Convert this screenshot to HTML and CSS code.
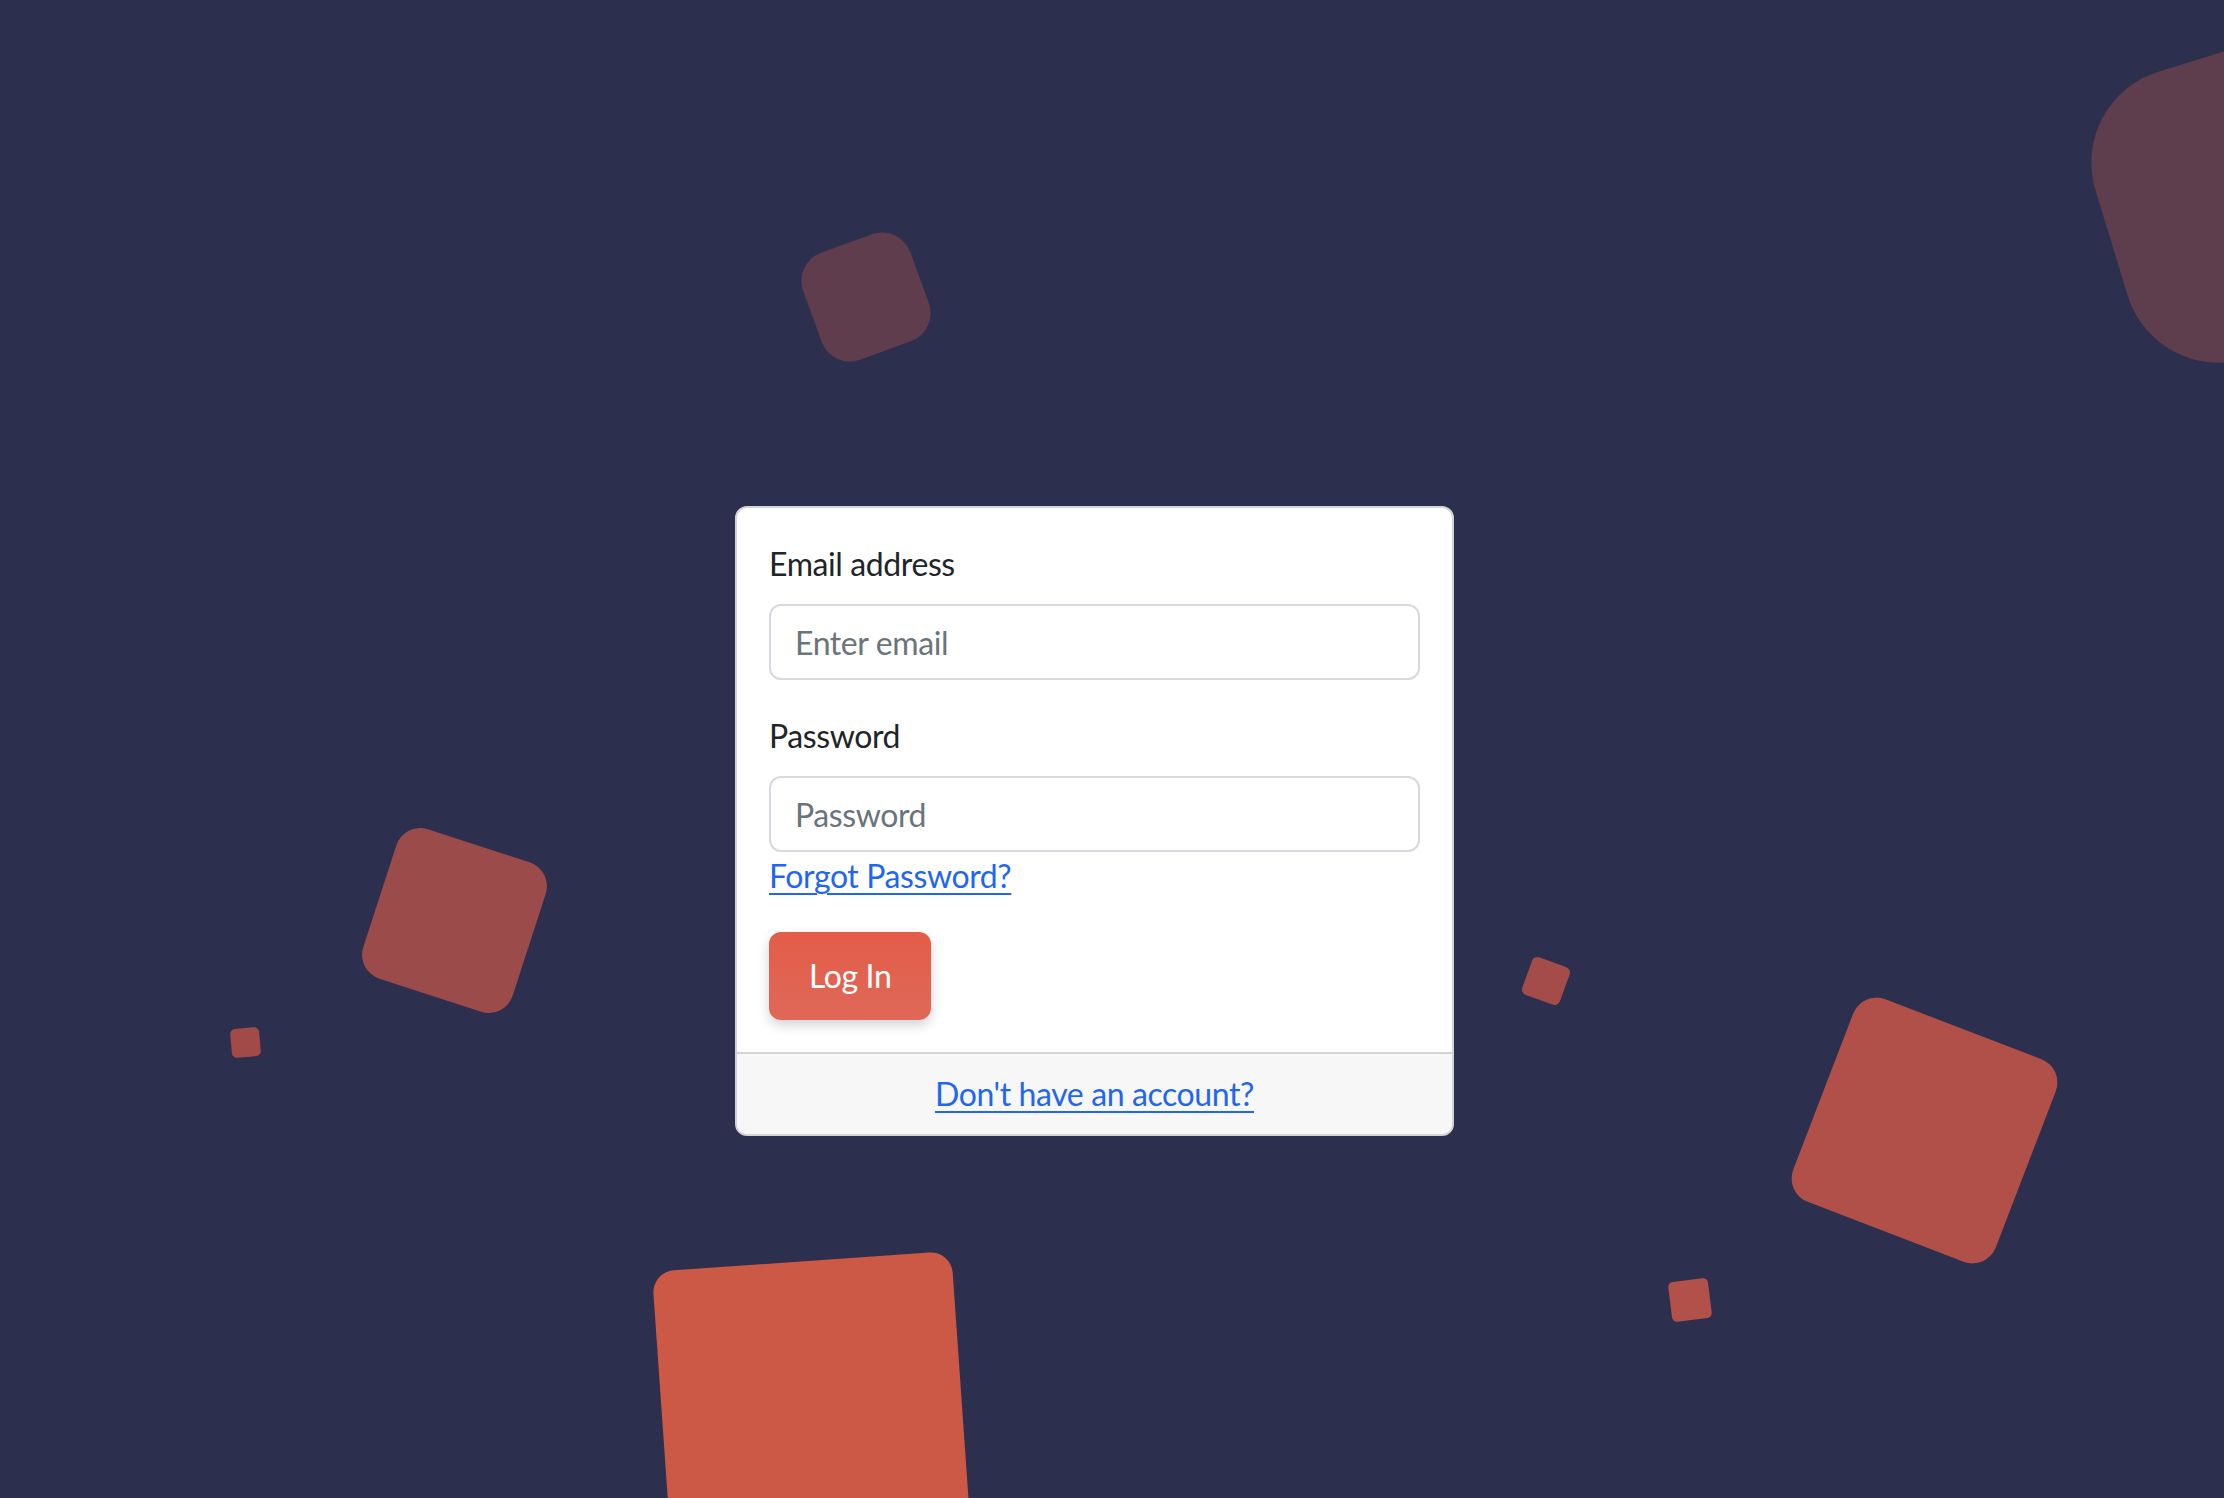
FILE: index.html
```html
<!DOCTYPE html>
<html lang="en">
<head>
    <meta charset="utf-8">
    <title>Log In</title>
    <link rel="stylesheet" href="styles.css">
</head>
<body>
    <ul class="shapes">
        <li class="sq sq-1"></li>
        <li class="sq sq-2"></li>
        <li class="sq sq-3"></li>
        <li class="sq sq-4"></li>
        <li class="sq sq-5"></li>
        <li class="sq sq-6"></li>
        <li class="sq sq-7"></li>
        <li class="sq sq-8"></li>
    </ul>

    <div class="page">
        <div class="card">
            <form class="card-body">
                <div class="field">
                    <label class="form-label" for="email">Email address</label>
                    <input class="form-control" type="email" id="email" placeholder="Enter email">
                </div>
                <div class="field field-last">
                    <label class="form-label" for="password">Password</label>
                    <input class="form-control" type="password" id="password" placeholder="Password">
                    <a class="link" href="#">Forgot Password?</a>
                </div>
                <button class="btn-login" type="button">Log In</button>
            </form>
            <div class="card-footer">
                <a class="link" href="#">Don't have an account?</a>
            </div>
        </div>
    </div>
</body>
</html>
```

FILE: styles.css
```css
html, body {
    margin: 0;
    height: 100%;
}
body {
    background-color: #2d2f4e;
    font-family: Lato, "Open Sans", sans-serif;
    letter-spacing: -0.4px;
    color: #212529;
    overflow: hidden;
    position: relative;
}

/* background squares */
.shapes {
    position: absolute;
    top: 0;
    left: 0;
    width: 100%;
    height: 100%;
    margin: 0;
    padding: 0;
    list-style: none;
    overflow: hidden;
}
.sq {
    position: absolute;
    display: block;
}
.sq-1 {
    left: 2105px; top: 49px; width: 300px; height: 300px;
    border-radius: 95px; background: #5e3d4c; transform: rotate(-17deg);
}
.sq-2 {
    left: 809px; top: 240px; width: 114px; height: 114px;
    border-radius: 30px; background: #603d4c; transform: rotate(-20deg);
}
.sq-3 {
    left: 376px; top: 842px; width: 157px; height: 157px;
    border-radius: 25px; background: #9b4b4a; transform: rotate(18deg);
}
.sq-4 {
    left: 231px; top: 1028px; width: 29px; height: 29px;
    border-radius: 5px; background: #a14a48; transform: rotate(-5deg);
}
.sq-5 {
    left: 1526px; top: 961px; width: 40px; height: 40px;
    border-radius: 6px; background: #a44c4a; transform: rotate(20deg);
}
.sq-6 {
    left: 1816px; top: 1022px; width: 217px; height: 217px;
    border-radius: 25px; background: #b05048; transform: rotate(21deg);
}
.sq-7 {
    left: 1670px; top: 1280px; width: 40px; height: 40px;
    border-radius: 5px; background: #b2504a; transform: rotate(-7deg);
}
.sq-8 {
    left: 662px; top: 1261px; width: 300px; height: 300px;
    border-radius: 22px; background: #cb5946; transform: rotate(-4deg);
}

.page {
    position: relative;
    box-sizing: border-box;
    padding: 506px 0 0 735px;
}
.card {
    width: 719px;
    box-sizing: border-box;
    background: #fff;
    border: 2px solid #d3d3d6;
    border-radius: 12px;
    overflow: hidden;
}
.card-body {
    display: flex;
    flex-direction: column;
    align-items: flex-start;
    padding: 32px;
    margin: 0;
}
.field {
    display: flex;
    flex-direction: column;
    width: 100%;
    margin-bottom: 32px;
}
.form-label {
    font-size: 32px;
    line-height: 48px;
    margin-bottom: 16px;
}
.form-control {
    box-sizing: border-box;
    width: 100%;
    height: 76px;
    padding: 12px 24px;
    font-family: inherit;
    letter-spacing: inherit;
    font-size: 32px;
    line-height: 48px;
    color: #212529;
    border: 2px solid #d6d9dd;
    border-radius: 12px;
    outline: none;
}
.form-control::placeholder {
    color: #6b737b;
}
.link {
    font-size: 32px;
    line-height: 48px;
    color: #1f66f2;
    text-decoration: underline;
    text-decoration-thickness: 2px;
    text-underline-offset: 5px;
}
.field-last .link {
    align-self: flex-start;
}
.btn-login {
    height: 88px;
    padding: 0 40px;
    border: 0;
    border-radius: 12px;
    background: linear-gradient(#e35d48, #df6858);
    box-shadow: 0 5px 12px rgba(0, 0, 0, 0.18);
    color: #fff;
    font-family: inherit;
    letter-spacing: inherit;
    font-size: 32px;
    line-height: 48px;
}
.card-footer {
    border-top: 2px solid #d3d3d6;
    background: #f7f7f7;
    padding: 16px 32px;
    text-align: center;
}
```
